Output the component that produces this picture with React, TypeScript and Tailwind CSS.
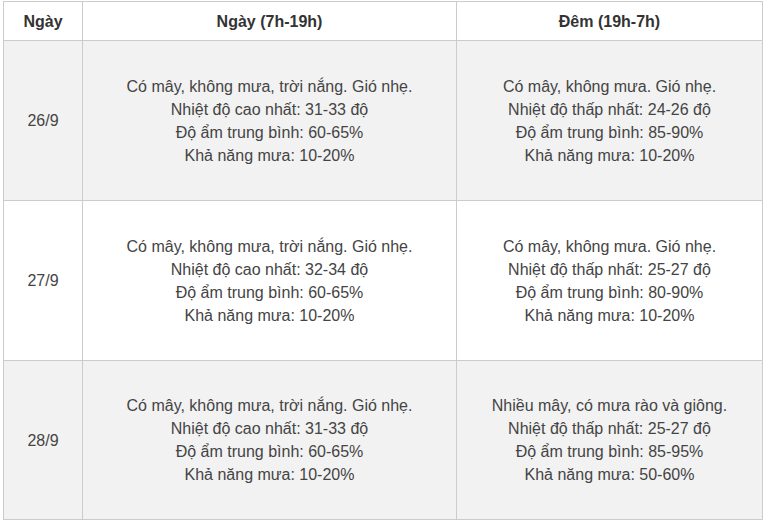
import React from "react";

type Row = {
  date: string;
  day: string[];
  night: string[];
  shaded: boolean;
};

const rows: Row[] = [
  {
    date: "26/9",
    day: [
      "Có mây, không mưa, trời nắng. Gió nhẹ.",
      "Nhiệt độ cao nhất: 31-33 độ",
      "Độ ẩm trung bình: 60-65%",
      "Khả năng mưa: 10-20%",
    ],
    night: [
      "Có mây, không mưa. Gió nhẹ.",
      "Nhiệt độ thấp nhất: 24-26 độ",
      "Độ ẩm trung bình: 85-90%",
      "Khả năng mưa: 10-20%",
    ],
    shaded: true,
  },
  {
    date: "27/9",
    day: [
      "Có mây, không mưa, trời nắng. Gió nhẹ.",
      "Nhiệt độ cao nhất: 32-34 độ",
      "Độ ẩm trung bình: 60-65%",
      "Khả năng mưa: 10-20%",
    ],
    night: [
      "Có mây, không mưa. Gió nhẹ.",
      "Nhiệt độ thấp nhất: 25-27 độ",
      "Độ ẩm trung bình: 80-90%",
      "Khả năng mưa: 10-20%",
    ],
    shaded: false,
  },
  {
    date: "28/9",
    day: [
      "Có mây, không mưa, trời nắng. Gió nhẹ.",
      "Nhiệt độ cao nhất: 31-33 độ",
      "Độ ẩm trung bình: 60-65%",
      "Khả năng mưa: 10-20%",
    ],
    night: [
      "Nhiều mây, có mưa rào và giông.",
      "Nhiệt độ thấp nhất: 25-27 độ",
      "Độ ẩm trung bình: 85-95%",
      "Khả năng mưa: 50-60%",
    ],
    shaded: true,
  },
];

const Lines = ({ lines }: { lines: string[] }) => (
  <>
    {lines.map((l) => (
      <div key={l}>{l}</div>
    ))}
  </>
);

export default function App() {
  return (
    <div
      className="bg-white w-[765px] h-[524px] pl-[3px] pt-[1px] text-[#444] text-[16px] leading-[23px]"
      style={{ fontFamily: '"Liberation Sans", Arial, sans-serif' }}
    >
      <table className="border-collapse w-[760px] text-center">
        <thead>
          <tr className="h-[39px]">
            <th className="w-[79px] border border-[#cccccc] font-bold text-[#333]">Ngày</th>
            <th className="w-[374px] border border-[#cccccc] font-bold text-[#333]">Ngày (7h-19h)</th>
            <th className="border border-[#cccccc] font-bold text-[#333]">Đêm (19h-7h)</th>
          </tr>
        </thead>
        <tbody>
          {rows.map((r, i) => (
            <tr
              key={r.date}
              className={`${i === 2 ? "h-[159px]" : "h-[160px]"} ${r.shaded ? "bg-[#f2f2f2]" : "bg-white"}`}
            >
              <td className="border border-[#cccccc]">{r.date}</td>
              <td className="border border-[#cccccc]">
                <Lines lines={r.day} />
              </td>
              <td className="border border-[#cccccc]">
                <Lines lines={r.night} />
              </td>
            </tr>
          ))}
        </tbody>
      </table>
    </div>
  );
}
